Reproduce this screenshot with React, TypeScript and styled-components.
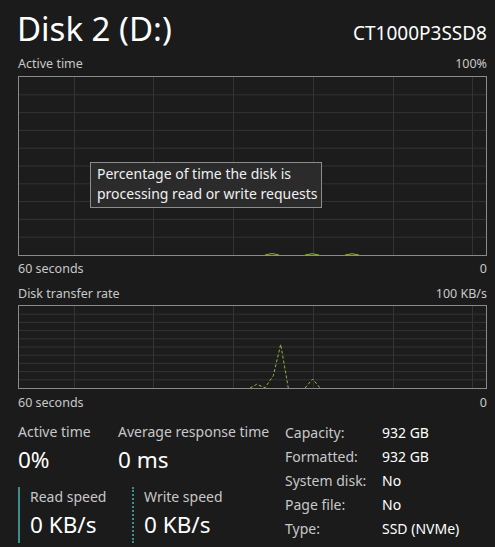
import React from "react";
import styled, { createGlobalStyle } from "styled-components";

const Global = createGlobalStyle`
  html, body { margin: 0; padding: 0; background: #1b1b1b; }
  body { font-family: "Noto Sans", "Open Sans", sans-serif; color: #ffffff; }
`;

const Page = styled.div`
  width: 495px;
  height: 547px;
  box-sizing: border-box;
  padding: 0 8px 0 18px;
  background: #1b1b1b;
  overflow: hidden;
  display: flex;
  flex-direction: column;
`;

const Header = styled.div`
  display: flex;
  justify-content: space-between;
  align-items: flex-end;
  height: 51px;
`;

const Title = styled.div`
  font-size: 33px;
  line-height: 42px;
  font-weight: 400;
  color: #ffffff;
  margin-left: -1px;
  margin-bottom: 1px;
`;

const Model = styled.div`
  font-size: 19px;
  line-height: 24px;
  color: #ffffff;
  margin-bottom: 6px;
`;

const AxisRow = styled.div<{ $h: number }>`
  display: flex;
  justify-content: space-between;
  font-size: 12.5px;
  color: #c8c8c8;
  height: ${(p) => p.$h}px;
  align-items: center;
`;

const Chart = styled.div<{ $h: number }>`
  position: relative;
  height: ${(p) => p.$h}px;
  border: 1px solid #8a8a8a;
  background: #1c1c1c;
  box-sizing: border-box;
`;

const ChartSvg = styled.svg`
  position: absolute;
  inset: 0;
  width: 100%;
  height: 100%;
  display: block;
`;

const Tooltip = styled.div`
  position: absolute;
  left: 71px;
  top: 85px;
  width: 232px;
  box-sizing: border-box;
  padding: 1px 6px 3px 6px;
  background: #2b2b2b;
  border: 1px solid #8c8c8c;
  font-size: 14px;
  line-height: 20px;
  color: #f0f0f0;
  white-space: nowrap;
`;

const Stats = styled.div`
  display: grid;
  grid-template-columns: 267px 1fr;
  margin-top: 7px;
`;

const LeftStats = styled.div`
  display: flex;
  flex-direction: column;
`;

const StatRow = styled.div`
  display: flex;
`;

const Stat = styled.div<{ $w: number }>`
  width: ${(p) => p.$w}px;
  display: flex;
  flex-direction: column;
`;

const Label = styled.div`
  font-size: 14px;
  line-height: 20px;
  color: #c8c8c8;
  white-space: nowrap;
`;

const Value = styled.div`
  font-size: 22.5px;
  line-height: 36px;
  color: #ffffff;
  white-space: nowrap;
`;

const Speed = styled.div<{ $w: number; $dashed?: boolean }>`
  width: ${(p) => p.$w}px;
  box-sizing: border-box;
  margin-top: 9px;
  padding-left: 10px;
  border-left: 2px ${(p) => (p.$dashed ? "dotted" : "solid")} #3d8f8a;
  display: flex;
  flex-direction: column;
`;

const Props = styled.div`
  display: grid;
  grid-template-columns: 97px 1fr;
  grid-auto-rows: 24px;
`;

const PropLabel = styled.div`
  font-size: 14px;
  line-height: 22px;
  color: #c8c8c8;
`;

const PropValue = styled.div`
  font-size: 14px;
  line-height: 22px;
  color: #ffffff;
`;

const vx = [55, 134, 214, 294, 374, 453];

function Grid() {
  const rows = [1, 2, 3, 4, 5, 6, 7, 8, 9];
  return (
    <>
      {rows.map((r) => (
        <line key={"h" + r} x1="0" x2="100%" y1={`${r * 10}%`} y2={`${r * 10}%`} stroke="#333333" strokeWidth="1" />
      ))}
      {vx.map((x) => (
        <line key={"v" + x} x1={x + 0.5} x2={x + 0.5} y1="0" y2="100%" stroke="#333333" strokeWidth="1" />
      ))}
    </>
  );
}

export default function App() {
  const t2 = [
    [231, 82],
    [237.7, 78.3],
    [246, 81.7],
    [254.3, 69.7],
    [261.7, 38.3],
    [269.3, 82],
  ];
  const t2b = [
    [286, 82],
    [293.7, 73],
    [301, 82],
  ];
  return (
    <Page>
      <Global />
      <Header>
        <Title>Disk 2 (D:)</Title>
        <Model>CT1000P3SSD8</Model>
      </Header>
      <AxisRow $h={25}>
        <span>Active time</span>
        <span>100%</span>
      </AxisRow>
      <Chart $h={180}>
        <ChartSvg>
          <Grid />
          <path d="M246 178 Q253 175 260 178 M286 178 Q293 175.5 300 178 M326 178 Q333 175.5 340 178" stroke="#8fb53a" strokeWidth="1" fill="none" />
        </ChartSvg>
        <Tooltip>
          Percentage of time the disk is
          <br />
          processing read or write requests
        </Tooltip>
      </Chart>
      <AxisRow $h={25}>
        <span>60 seconds</span>
        <span>0</span>
      </AxisRow>
      <AxisRow $h={24}>
        <span>Disk transfer rate</span>
        <span>100 KB/s</span>
      </AxisRow>
      <Chart $h={84}>
        <ChartSvg>
          <Grid />
          <polyline points={t2.map((p) => p.join(",")).join(" ")} stroke="#8fb53a" strokeWidth="1" strokeDasharray="3 2" fill="none" />
          <polyline points={t2b.map((p) => p.join(",")).join(" ")} stroke="#8fb53a" strokeWidth="1" strokeDasharray="3 2" fill="none" />
        </ChartSvg>
      </Chart>
      <AxisRow $h={26}>
        <span>60 seconds</span>
        <span>0</span>
      </AxisRow>
      <Stats>
        <LeftStats>
          <StatRow>
            <Stat $w={100}>
              <Label>Active time</Label>
              <Value>0%</Value>
            </Stat>
            <Stat $w={160}>
              <Label>Average response time</Label>
              <Value>0 ms</Value>
            </Stat>
          </StatRow>
          <StatRow>
            <Speed $w={114}>
              <Label>Read speed</Label>
              <Value>0 KB/s</Value>
            </Speed>
            <Speed $w={120} $dashed>
              <Label>Write speed</Label>
              <Value>0 KB/s</Value>
            </Speed>
          </StatRow>
        </LeftStats>
        <Props>
          <PropLabel>Capacity:</PropLabel>
          <PropValue>932 GB</PropValue>
          <PropLabel>Formatted:</PropLabel>
          <PropValue>932 GB</PropValue>
          <PropLabel>System disk:</PropLabel>
          <PropValue>No</PropValue>
          <PropLabel>Page file:</PropLabel>
          <PropValue>No</PropValue>
          <PropLabel>Type:</PropLabel>
          <PropValue>SSD (NVMe)</PropValue>
        </Props>
      </Stats>
    </Page>
  );
}
